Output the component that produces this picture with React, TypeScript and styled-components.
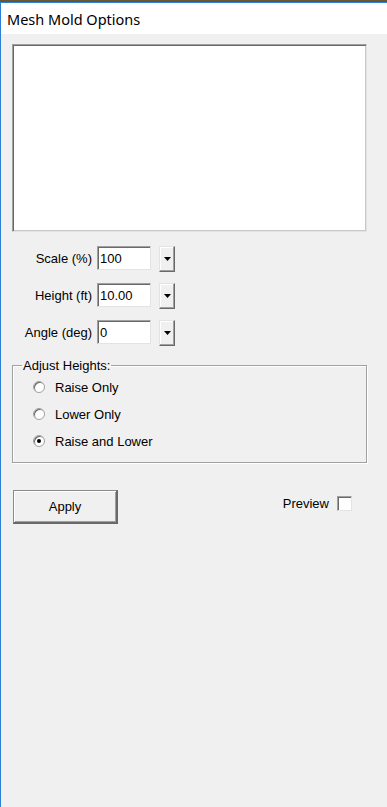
import React, { useState } from "react";
import styled, { createGlobalStyle } from "styled-components";

const GlobalStyle = createGlobalStyle`
  html, body {
    margin: 0;
    padding: 0;
    background: #f0f0f0;
  }
  body {
    font-family: "Liberation Sans", Arial, sans-serif;
  }
`;

const Desktop = styled.div`
  width: 387px;
  height: 807px;
  background: #6b5632;
  padding-top: 2px;
  box-sizing: border-box;
  overflow: hidden;
`;

const Window = styled.div`
  height: 805px;
  border-top: 1px solid #2b7fd4;
  border-left: 1px solid #2b7fd4;
  background: #f0f0f0;
  display: flex;
  flex-direction: column;
`;

const TitleBar = styled.div`
  height: 31px;
  background: #ffffff;
  display: flex;
  align-items: center;
  padding-left: 6px;
  font-family: "Noto Sans", "Liberation Sans", sans-serif;
  font-size: 14.5px;
  color: #000;
`;

const Body = styled.div`
  flex: 1;
  padding: 10px 20px 0 11px;
  display: flex;
  flex-direction: column;
  font-size: 13px;
  color: #000;
`;

const PreviewPane = styled.div`
  height: 186px;
  background: #fff;
  border: 1px solid #a0a0a0;
  border-right-color: #e3e3e3;
  border-bottom-color: #e3e3e3;
  box-shadow: inset 1px 1px 0 #696969, inset -1px -1px 0 #c8c8c8;
`;

const Fields = styled.div`
  display: flex;
  flex-direction: column;
  gap: 13px;
  margin-top: 14px;
`;

const FieldRow = styled.div`
  display: flex;
  align-items: center;
  height: 24px;
`;

const FieldLabel = styled.label`
  width: 80px;
  text-align: right;
  padding-right: 5px;
  white-space: nowrap;
`;

const TextBox = styled.input`
  width: 54px;
  height: 24px;
  box-sizing: border-box;
  border: 1px solid #a0a0a0;
  border-right-color: #e3e3e3;
  border-bottom-color: #e3e3e3;
  box-shadow: inset 1px 1px 0 #696969;
  padding: 1px 0 0 2px;
  font-family: "Liberation Sans", Arial, sans-serif;
  font-size: 13px;
  background: #fff;
  outline: none;
`;

const SpinButton = styled.button`
  width: 16px;
  height: 26px;
  margin-left: 8px;
  margin-top: 2px;
  padding: 0;
  background: #f0f0f0;
  border: 1px solid #e3e3e3;
  border-right-color: #696969;
  border-bottom-color: #696969;
  box-shadow: inset -1px -1px 0 #a0a0a0, inset 1px 1px 0 #fff;
  display: flex;
  align-items: center;
  justify-content: center;
`;

const Group = styled.fieldset`
  margin: 14px 0 0;
  padding: 6px 0 13px 9px;
  border: 1px solid #a0a0a0;
  box-shadow: inset 1px 1px 0 #fff, 1px 1px 0 #fff;
  display: flex;
  flex-direction: column;
  gap: 11px;
`;

const Legend = styled.legend`
  padding: 0 1px;
  margin-left: 0;
  font-size: 13px;
`;

const RadioRow = styled.label`
  display: flex;
  align-items: center;
  gap: 10px;
  height: 16px;
  margin-left: 11px;
`;

const RadioDot = styled.span<{ $on: boolean }>`
  width: 12px;
  height: 12px;
  border-radius: 50%;
  box-sizing: border-box;
  background: #fff;
  border: 1px solid #a0a0a0;
  box-shadow: inset 1px 1px 0 #696969;
  display: flex;
  align-items: center;
  justify-content: center;
  &::after {
    content: "";
    width: 4px;
    height: 4px;
    border-radius: 50%;
    background: ${(p) => (p.$on ? "#000" : "transparent")};
  }
`;

const Footer = styled.div`
  display: flex;
  align-items: center;
  justify-content: space-between;
  margin-top: 27px;
`;

const ApplyButton = styled.button`
  width: 105px;
  height: 34px;
  box-sizing: border-box;
  margin-left: 1px;
  background: #f0f0f0;
  border: 1px solid #8a8a8a;
  border-right: 2px solid #696969;
  border-bottom: 2px solid #696969;
  box-shadow: inset 1px 1px 0 #fff, inset -1px -1px 0 #a0a0a0;
  font-family: "Liberation Sans", Arial, sans-serif;
  font-size: 13px;
  color: #000;
  padding: 0;
`;

const PreviewToggle = styled.label`
  display: flex;
  align-items: center;
  gap: 8px;
  margin-right: 15px;
  margin-top: -7px;
`;

const CheckBox = styled.span`
  width: 15px;
  height: 15px;
  box-sizing: border-box;
  background: #fff;
  border: 1px solid #a0a0a0;
  border-right-color: #e3e3e3;
  border-bottom-color: #e3e3e3;
  box-shadow: inset 1px 1px 0 #696969;
`;

const fields = [
  { label: "Scale (%)", value: "100" },
  { label: "Height (ft)", value: "10.00" },
  { label: "Angle (deg)", value: "0" },
];

const modes = ["Raise Only", "Lower Only", "Raise and Lower"];

function DownArrow() {
  return (
    <svg width="7" height="4" viewBox="0 0 7 4">
      <path d="M0 0h7L3.5 4z" fill="#000" />
    </svg>
  );
}

export default function App() {
  const [mode, setMode] = useState(2);

  return (
    <>
      <GlobalStyle />
      <Desktop>
        <Window>
          <TitleBar>Mesh Mold Options</TitleBar>
          <Body>
            <PreviewPane />
            <Fields>
              {fields.map((f) => (
                <FieldRow key={f.label}>
                  <FieldLabel>{f.label}</FieldLabel>
                  <TextBox defaultValue={f.value} />
                  <SpinButton>
                    <DownArrow />
                  </SpinButton>
                </FieldRow>
              ))}
            </Fields>
            <Group>
              <Legend>Adjust Heights:</Legend>
              {modes.map((m, i) => (
                <RadioRow key={m} onClick={() => setMode(i)}>
                  <RadioDot $on={mode === i} />
                  {m}
                </RadioRow>
              ))}
            </Group>
            <Footer>
              <ApplyButton>Apply</ApplyButton>
              <PreviewToggle>
                Preview
                <CheckBox />
              </PreviewToggle>
            </Footer>
          </Body>
        </Window>
      </Desktop>
    </>
  );
}
